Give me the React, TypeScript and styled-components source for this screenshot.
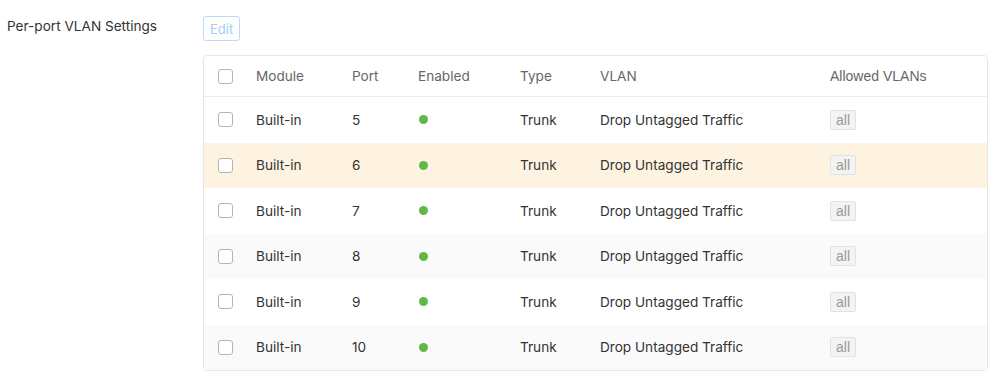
import React from "react";
import styled, { createGlobalStyle } from "styled-components";

const Global = createGlobalStyle`
  html, body { margin: 0; padding: 0; background: #ffffff; }
  body { font-family: Inter, "Liberation Sans", sans-serif; color: #333; }
`;

const Page = styled.div`
  display: flex;
  padding: 16px 0 0 7px;
`;

const Label = styled.div`
  width: 196px;
  font-size: 13.6px;
  line-height: 20px;
  color: #333;
  flex-shrink: 0;
`;

const Content = styled.div`
  display: flex;
  flex-direction: column;
  align-items: flex-start;
  gap: 14px;
`;

const EditButton = styled.button`
  height: 25px;
  padding: 0 6px;
  border: 1px solid #b8dafc;
  border-radius: 3px;
  background: #fff;
  color: #a5cdf6;
  font-family: Inter, "Liberation Sans", sans-serif;
  font-size: 13px;
  cursor: not-allowed;
`;

const Table = styled.div`
  width: 785px;
  box-sizing: border-box;
  border: 1px solid #e6e6e6;
  border-radius: 4px;
  overflow: hidden;
`;

const cols = "38px 96px 66px 102px 80px 230px 1fr";

const HeaderRow = styled.div`
  display: grid;
  grid-template-columns: ${cols};
  align-items: center;
  height: 40px;
  padding-left: 14px;
  border-bottom: 1px solid #ececec;
  color: #666;
  font-size: 13.6px;
`;

const Row = styled.div<{ $bg: string }>`
  display: grid;
  grid-template-columns: ${cols};
  align-items: center;
  height: 45.5px;
  padding-left: 14px;
  background: ${(p) => p.$bg};
  color: #333;
  font-size: 13.6px;
`;

const Cell = styled.div<{ $alt?: boolean }>`
  font-family: ${(p) => (p.$alt ? '"Liberation Sans", Arial, sans-serif' : 'Inter, "Liberation Sans", sans-serif')};
  font-size: ${(p) => (p.$alt ? "14px" : "inherit")};
  display: flex;
  align-items: center;
`;

const Check = styled.span`
  display: inline-block;
  width: 15px;
  height: 15px;
  box-sizing: border-box;
  border: 1px solid #b4b4b8;
  border-radius: 3px;
  background: #fff;
`;

const Dot = styled.span`
  display: inline-block;
  width: 9px;
  height: 9px;
  margin-left: 1px;
  border-radius: 50%;
  background: #62b845;
`;

const Tag = styled.span`
  display: inline-block;
  height: 20px;
  line-height: 18px;
  box-sizing: border-box;
  padding: 0 5px;
  border: 1px solid #e2e2e2;
  border-radius: 2px;
  background: #f3f3f3;
  color: #999;
  font-family: "Liberation Sans", Arial, sans-serif;
  font-size: 14px;
`;

const rows = [
  { port: 5, bg: "#ffffff" },
  { port: 6, bg: "#fef3e1" },
  { port: 7, bg: "#ffffff" },
  { port: 8, bg: "#fafafa" },
  { port: 9, bg: "#ffffff" },
  { port: 10, bg: "#fafafa" },
];

export default function App() {
  return (
    <>
      <Global />
      <Page>
        <Label>Per-port VLAN Settings</Label>
        <Content>
          <EditButton disabled>Edit</EditButton>
          <Table>
            <HeaderRow>
              <Cell><Check /></Cell>
              <Cell>Module</Cell>
              <Cell>Port</Cell>
              <Cell>Enabled</Cell>
              <Cell>Type</Cell>
              <Cell>VLAN</Cell>
              <Cell $alt>Allowed VLANs</Cell>
            </HeaderRow>
            {rows.map((r) => (
              <Row key={r.port} $bg={r.bg}>
                <Cell><Check /></Cell>
                <Cell>Built-in</Cell>
                <Cell>{r.port}</Cell>
                <Cell><Dot /></Cell>
                <Cell>Trunk</Cell>
                <Cell>Drop Untagged Traffic</Cell>
                <Cell><Tag>all</Tag></Cell>
              </Row>
            ))}
          </Table>
        </Content>
      </Page>
    </>
  );
}
